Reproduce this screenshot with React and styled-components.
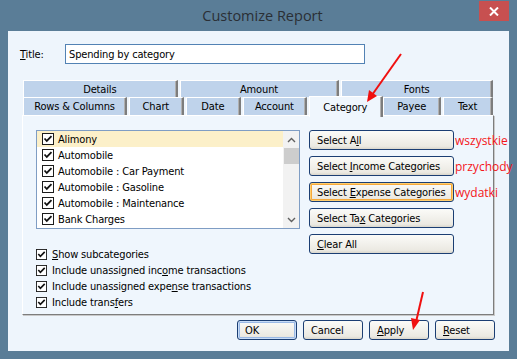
import React from 'react';
import styled, { createGlobalStyle } from 'styled-components';

const GlobalStyle = createGlobalStyle`
  body {
    margin: 0;
    background: #5a7d97;
  }
`;

const Window = styled.div`
  position: relative;
  width: 517px;
  height: 359px;
  background: #5a7d97;
  display: flex;
  flex-direction: column;
  font-family: "DejaVu Sans Condensed", "DejaVu Sans", sans-serif;
  font-size: 11px;
  letter-spacing: -0.15px;
  color: #000;
  overflow: hidden;
`;

const TitleBar = styled.div`
  height: 31px;
  display: grid;
  grid-template-columns: 1fr auto 1fr;
  align-items: start;
`;

const Caption = styled.div`
  grid-column: 2;
  font-family: "Open Sans", "Noto Sans", sans-serif;
  font-size: 14.5px;
  letter-spacing: 0;
  color: #2a2f35;
  line-height: 31px;
  padding-left: 8px;
`;

const CloseButton = styled.div`
  grid-column: 3;
  justify-self: end;
  margin: 1px 8px 0 0;
  width: 30px;
  height: 20px;
  background: #c75050;
  display: flex;
  align-items: center;
  justify-content: center;
`;

const Client = styled.div`
  flex: 1;
  margin: 0 8px 8px;
  background: #eef5fc;
  padding: 13px 14px 0 12px;
  display: flex;
  flex-direction: column;
`;

const TitleRow = styled.div`
  display: flex;
  align-items: center;
  height: 20px;
`;

const Label = styled.span`
  width: 45px;
`;

const TextInput = styled.div`
  width: 295px;
  height: 18px;
  border: 1px solid #5282b4;
  background: #fff;
  display: flex;
  align-items: center;
  padding-left: 3px;
  box-sizing: content-box;
`;

const Tabs = styled.div`
  margin: 16px 0 0 3px;
  display: flex;
  flex-direction: column;
  position: relative;
  z-index: 1;
`;

const TabRow = styled.div`
  display: flex;
  height: ${p => p.$h}px;
  align-items: flex-end;
`;

const Tab = styled.div`
  width: ${p => p.$w}px;
  height: ${p => (p.$active ? p.$h + 3 : p.$h)}px;
  margin-bottom: ${p => (p.$active ? -2 : 0)}px;
  margin-right: ${p => p.$gap}px;
  box-sizing: border-box;
  background: ${p => (p.$active ? '#eff6fd' : '#bfd3eb')};
  border-top: 1px solid #fff;
  border-left: 1px solid #fff;
  border-right: 2px solid #7d7d7d;
  box-shadow: inset -1px 0 0 #b0b0b0;
  display: flex;
  align-items: center;
  justify-content: center;
  padding-top: ${p => (p.$active ? 1 : 0)}px;
`;

const Panel = styled.div`
  margin-left: 2px;
  width: 472px;
  height: 200px;
  box-sizing: border-box;
  background: #eff6fd;
  border-top: 1px solid #fff;
  border-left: 1px solid #fff;
  border-right: 1px solid #7d7d7d;
  border-bottom: 1px solid #7d7d7d;
  box-shadow: 1px 1px 0 #c9c9c9;
  padding: 14px 0 0 13px;
  display: grid;
  grid-template-columns: 264px auto;
  column-gap: 9px;
  align-items: start;
`;

const LeftColumn = styled.div`
  display: flex;
  flex-direction: column;
`;

const ListBox = styled.div`
  width: 264px;
  height: 99px;
  box-sizing: border-box;
  border: 1px solid #7f9dc4;
  background: #fff;
  display: flex;
`;

const ListItems = styled.div`
  flex: 1;
  display: flex;
  flex-direction: column;
`;

const ListItem = styled.div`
  height: 16px;
  display: flex;
  align-items: center;
  gap: 4px;
  padding-left: 5px;
  background: ${p => (p.$selected ? '#fcf0c9' : 'transparent')};
`;

const ScrollBar = styled.div`
  width: 16px;
  background: #f2f2f2;
  display: flex;
  flex-direction: column;
  align-items: center;
`;

const ScrollArrow = styled.div`
  height: 17px;
  width: 16px;
  display: flex;
  align-items: center;
  justify-content: center;
`;

const Thumb = styled.div`
  width: 15px;
  height: 16px;
  background: #cdcdcd;
`;

const ScrollTrack = styled.div`
  flex: 1;
`;

const Options = styled.div`
  margin-top: 17px;
  display: flex;
  flex-direction: column;
`;

const Option = styled.div`
  height: 16px;
  display: flex;
  align-items: center;
  gap: 5px;
`;

const ButtonColumn = styled.div`
  display: flex;
  flex-direction: column;
  gap: 6px;
`;

const ButtonLine = styled.div`
  display: flex;
  align-items: center;
  gap: 1px;
`;

const Button = styled.div`
  width: ${p => p.$w}px;
  height: 20px;
  box-sizing: border-box;
  border: 1px solid #1b3e73;
  border-radius: 3px;
  background: linear-gradient(#fbfbf8, #ebe9e2 85%, #d9d6cc);
  box-shadow: ${p =>
    p.$focus
      ? 'inset 0 0 0 1px #ffcf70, inset 0 0 0 2px #f6a93a'
      : p.$default
      ? 'inset 0 0 0 1px #c8dcf6, inset 0 0 0 2px #9ab9e6'
      : 'none'};
  display: flex;
  align-items: center;
  padding-left: 7px;
  white-space: nowrap;
`;

const BottomButtons = styled.div`
  margin-top: 5px;
  display: flex;
  justify-content: flex-end;
  gap: 6px;
`;

const Note = styled.span`
  font-family: "Open Sans", "Noto Sans", sans-serif;
  font-size: 12px;
  letter-spacing: 0;
  color: #f4151a;
  white-space: nowrap;
`;

const Arrows = styled.svg`
  position: absolute;
  left: 0;
  top: 0;
  pointer-events: none;
  z-index: 5;
`;

const Check = ({ size = 12 }) => (
  <svg width={size} height={size} viewBox="0 0 12 12">
    <rect x="0.5" y="0.5" width="11" height="11" fill="#fff" stroke="#1c1c1c" />
    <path d="M2.5 5.5 L4.8 8 L9.5 3.2" fill="none" stroke="#111" strokeWidth="1.8" />
  </svg>
);

const Chevron = ({ up }) => (
  <svg width="9" height="6" viewBox="0 0 9 6">
    <path d={up ? 'M1 5 L4.5 1.5 L8 5' : 'M1 1 L4.5 4.5 L8 1'} fill="none" stroke="#606060" strokeWidth="1.4" />
  </svg>
);

const categories = [
  'Alimony',
  'Automobile',
  'Automobile : Car Payment',
  'Automobile : Gasoline',
  'Automobile : Maintenance',
  'Bank Charges',
];

const topTabs = [
  ['Details', 155],
  ['Amount', 160],
  ['Fonts', 152],
];

const bottomTabs = [
  ['Rows & Columns', 105],
  ['Chart', 55],
  ['Date', 56],
  ['Account', 64],
  ['Category', 75],
  ['Payee', 59],
  ['Text', 50],
];

export default function App() {
  return (
    <Window>
      <GlobalStyle />
      <TitleBar>
        <Caption>Customize Report</Caption>
        <CloseButton>
          <svg width="10" height="9" viewBox="0 0 10 9">
            <path d="M1 0.5 L9 8.5 M9 0.5 L1 8.5" stroke="#fff" strokeWidth="2" />
          </svg>
        </CloseButton>
      </TitleBar>
      <Client>
        <TitleRow>
          <Label><u>T</u>itle:</Label>
          <TextInput>Spending by category</TextInput>
        </TitleRow>
        <Tabs>
          <TabRow $h={17}>
            {topTabs.map(([t, w]) => (
              <Tab key={t} $w={w} $h={17} $gap={2}>{t}</Tab>
            ))}
          </TabRow>
          <TabRow $h={18}>
            {bottomTabs.map(([t, w]) => (
              <Tab key={t} $w={w} $h={18} $active={t === 'Category'} $gap={t === 'Category' ? 0 : 2}>
                {t}
              </Tab>
            ))}
          </TabRow>
        </Tabs>
        <Panel>
          <LeftColumn>
            <ListBox>
              <ListItems>
                {categories.map((c, i) => (
                  <ListItem key={c} $selected={i === 0}>
                    <Check />
                    <span>{c}</span>
                  </ListItem>
                ))}
              </ListItems>
              <ScrollBar>
                <ScrollArrow><Chevron up /></ScrollArrow>
                <Thumb />
                <ScrollTrack />
                <ScrollArrow><Chevron /></ScrollArrow>
              </ScrollBar>
            </ListBox>
            <Options>
              <Option><Check size={11} /><span><u>S</u>how subcategories</span></Option>
              <Option><Check size={11} /><span>Include unassigned inc<u>o</u>me transactions</span></Option>
              <Option><Check size={11} /><span>Include unassigned expe<u>n</u>se transactions</span></Option>
              <Option><Check size={11} /><span>Include trans<u>f</u>ers</span></Option>
            </Options>
          </LeftColumn>
          <ButtonColumn>
            <ButtonLine>
              <Button $w={145}><span>Select A<u>l</u>l</span></Button>
              <Note>wszystkie</Note>
            </ButtonLine>
            <ButtonLine>
              <Button $w={145}><span>Select <u>I</u>ncome Categories</span></Button>
              <Note>przychody</Note>
            </ButtonLine>
            <ButtonLine>
              <Button $w={145} $focus><span>Select <u>E</u>xpense Categories</span></Button>
              <Note>wydatki</Note>
            </ButtonLine>
            <ButtonLine>
              <Button $w={145}><span>Select Ta<u>x</u> Categories</span></Button>
            </ButtonLine>
            <ButtonLine>
              <Button $w={145}><span><u>C</u>lear All</span></Button>
            </ButtonLine>
          </ButtonColumn>
        </Panel>
        <BottomButtons>
          <Button $w={60} $default><span>OK</span></Button>
          <Button $w={60}><span>Cancel</span></Button>
          <Button $w={60}><span><u>A</u>pply</span></Button>
          <Button $w={60}><span><u>R</u>eset</span></Button>
        </BottomButtons>
      </Client>
      <Arrows width="517" height="359" viewBox="0 0 517 359">
        <path d="M401 54 L372 95" stroke="#f01010" strokeWidth="2" />
        <path d="M367 102 L369 90 L377 96 Z" fill="#f01010" />
        <path d="M423 292 L416 322" stroke="#f01010" strokeWidth="2" />
        <path d="M413 330 L411 318 L420 320 Z" fill="#f01010" />
      </Arrows>
    </Window>
  );
}
